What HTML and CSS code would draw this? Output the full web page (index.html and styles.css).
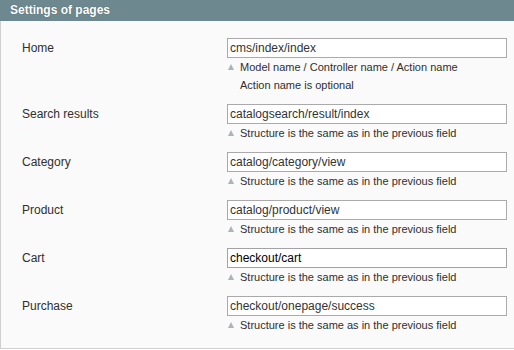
FILE: index.html
```html
<!DOCTYPE html>
<html>
<head>
<meta charset="utf-8">
<link rel="stylesheet" href="styles.css">
</head>
<body>
<div class="section">
  <div class="section-head">Settings of pages</div>
  <div class="section-body">
    <div class="row">
      <label class="label">Home</label>
      <div class="value">
        <input class="field" type="text" value="cms/index/index">
        <div class="note"><span class="arrow"></span>Model name / Controller name / Action name</div>
        <div class="note note-plain">Action name is optional</div>
      </div>
    </div>
    <div class="row">
      <label class="label">Search results</label>
      <div class="value">
        <input class="field" type="text" value="catalogsearch/result/index">
        <div class="note"><span class="arrow"></span>Structure is the same as in the previous field</div>
      </div>
    </div>
    <div class="row">
      <label class="label">Category</label>
      <div class="value">
        <input class="field" type="text" value="catalog/category/view">
        <div class="note"><span class="arrow"></span>Structure is the same as in the previous field</div>
      </div>
    </div>
    <div class="row">
      <label class="label">Product</label>
      <div class="value">
        <input class="field" type="text" value="catalog/product/view">
        <div class="note"><span class="arrow"></span>Structure is the same as in the previous field</div>
      </div>
    </div>
    <div class="row">
      <label class="label">Cart</label>
      <div class="value">
        <input class="field field-active" type="text" value="checkout/cart">
        <div class="note"><span class="arrow"></span>Structure is the same as in the previous field</div>
      </div>
    </div>
    <div class="row">
      <label class="label">Purchase</label>
      <div class="value">
        <input class="field" type="text" value="checkout/onepage/success">
        <div class="note"><span class="arrow"></span>Structure is the same as in the previous field</div>
      </div>
    </div>
  </div>
</div>
</body>
</html>
```
FILE: styles.css
```css
html, body {
  margin: 0;
  padding: 0;
  background: #ffffff;
}
body {
  font-family: "Liberation Sans", Arial, Helvetica, sans-serif;
  color: #2f2f2f;
  width: 514px;
  overflow: hidden;
}
.section {
  width: 530px;
}
.section-head {
  height: 21px;
  line-height: 21px;
  background: #6e8890;
  color: #ffffff;
  font-size: 12px;
  font-weight: bold;
  padding-left: 10px;
  text-shadow: 0 0 1px rgba(40, 60, 66, 0.6);
}
.section-body {
  background: #fafafa;
  border-left: 1px solid #cfcfcf;
  border-bottom: 1px solid #cfcfcf;
  padding: 17px 0 14px 21px;
  display: flex;
  flex-direction: column;
  gap: 10px;
}
.row {
  display: grid;
  grid-template-columns: 205px 280px;
}
.label {
  font-size: 12px;
  line-height: 20px;
  color: #2f2f2f;
}
.value {
  display: flex;
  flex-direction: column;
}
.field {
  box-sizing: border-box;
  width: 280px;
  height: 20px;
  margin: 0;
  padding: 0 2px;
  border: 1px solid #aaaaaa;
  background: #ffffff;
  font-family: "Liberation Sans", Arial, Helvetica, sans-serif;
  font-size: 12px;
  color: #333333;
  outline: none;
}
.field-active {
  color: #000000;
  border-color: #a3a3a3;
}
.note {
  font-size: 11px;
  line-height: 18px;
  height: 18px;
  color: #2f2f2f;
  display: flex;
  align-items: center;
}
.note-plain {
  padding-left: 13px;
}
.arrow {
  width: 0;
  height: 0;
  margin: 0 6px 0 1px;
  border-left: 3px solid transparent;
  border-right: 3px solid transparent;
  border-bottom: 6px solid #a9b3b8;
}
```
